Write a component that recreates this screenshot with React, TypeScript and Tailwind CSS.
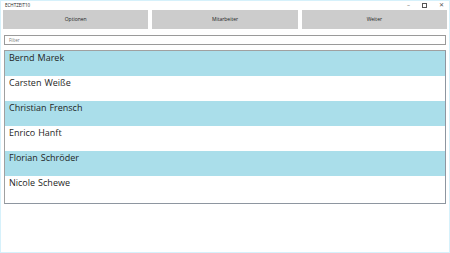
const people = [
  ['Bernd', 'Marek'],
  ['Carsten', 'Weiße'],
  ['Christian', 'Frensch'],
  ['Enrico', 'Hanft'],
  ['Florian', 'Schröder'],
  ['Nicole', 'Schewe'],
]

export default function App() {
  return (
    <div className="w-[450px] h-[253px] bg-white border border-[#d6f1fb] flex flex-col overflow-hidden" style={{ fontFamily: '"Open Sans", "Noto Sans", sans-serif' }}>
      <div className="h-[8px] flex items-center justify-between pl-[4px] pr-[5px]">
        <span className="text-[4.5px] leading-none text-[#222]">ECHTZEIT10</span>
        <div className="flex items-center gap-[12px] text-[6px] leading-none text-[#555]">
          <span>–</span>
          <span className="inline-block w-[5px] h-[5px] border border-[#555]"></span>
          <span>✕</span>
        </div>
      </div>

      <div className="flex gap-[4px] px-[2px] pt-[1px]">
        {['Optionen', 'Mitarbeiter', 'Weiter'].map((label) => (
          <button key={label} className="flex-1 h-[19px] bg-[#cccccc] text-[5px] text-[#222] flex items-center justify-center">
            {label}
          </button>
        ))}
      </div>

      <div className="mx-[3px] mt-[6px] h-[10px] border border-[#9a9a9a] flex items-center pl-[4px]">
        <span className="text-[4.5px] text-[#777] leading-none">Filter</span>
      </div>

      <div className="mx-[3px] mt-[5px] h-[154px] border border-[#a0a0a0] border-b-[#8e96a0] border-r-[#8e96a0] bg-white">
        {people.map(([first, last], i) => (
          <div key={first} className={`h-[25px] flex gap-[3px] pl-[4px] pt-[1px] text-[9px] leading-[12px] text-[#1e1e1e] ${i % 2 === 0 ? 'bg-[#aadeea]' : 'bg-white'}`}>
            <span>{first}</span>
            <span>{last}</span>
          </div>
        ))}
      </div>
    </div>
  )
}
